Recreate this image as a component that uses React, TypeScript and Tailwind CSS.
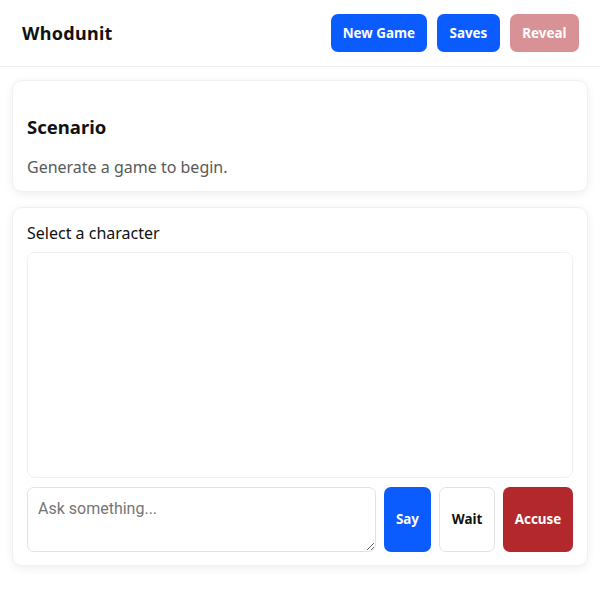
import React, { useState } from 'react';

const font = "font-['Noto_Sans',_'Open_Sans',_sans-serif]";

export default function App() {
  const [question, setQuestion] = useState('');

  return (
    <div className={`${font} min-h-[600px] bg-white text-[#111]`}>
      <header className="flex h-[67px] items-center justify-between border-b border-[#eeeeee] pl-[22px] pr-[21px]">
        <h1 className="text-[18px] font-bold tracking-[0.3px]">Whodunit</h1>
        <div className="flex gap-[10px]">
          <button className="h-[38px] rounded-[7px] bg-[#0b5cff] px-[12px] text-[13.4px] font-bold text-white">
            New Game
          </button>
          <button className="h-[38px] rounded-[7px] bg-[#0b5cff] px-[12.5px] text-[13.4px] font-bold text-white">
            Saves
          </button>
          <button
            disabled
            className="h-[38px] rounded-[7px] bg-[#b3282d] px-[12.5px] text-[13.4px] font-bold text-white opacity-50"
          >
            Reveal
          </button>
        </div>
      </header>

      <main className="flex flex-col gap-[15px] px-[12px] pt-[13px]">
        <section className="rounded-[10px] border border-[#f0f0f0] px-[14px] pb-[12px] pt-[32px] shadow-[0_2px_10px_rgba(0,0,0,0.07)]">
          <h2 className="text-[18.5px] font-bold leading-[27px]">Scenario</h2>
          <p className="mt-[15px] text-[16px] leading-[24px] text-[#5a5a5a]">Generate a game to begin.</p>
        </section>

        <section className="rounded-[10px] border border-[#f0f0f0] px-[14px] pb-[13px] pt-[13px] shadow-[0_2px_10px_rgba(0,0,0,0.07)]">
          <div className="text-[16px] leading-[24px]">Select a character</div>
          <div className="mt-[7px] h-[226px] rounded-[8px] border border-[#f0f0f0]" />
          <div className="mt-[9px] flex h-[65px] gap-[8px]">
            <textarea
              value={question}
              onChange={(e) => setQuestion(e.target.value)}
              placeholder="Ask something..."
              className="flex-1 resize-y rounded-[7px] border border-[#e2e2e2] p-[10px] font-['Roboto',_sans-serif] text-[16px] leading-[22px] outline-none placeholder:text-[#757575]"
            />
            <button className="w-[47px] rounded-[7px] bg-[#0b5cff] text-[13.4px] font-bold text-white">Say</button>
            <button className="w-[56px] rounded-[7px] border border-[#e2e2e2] bg-white text-[13.4px] font-bold text-[#111]">
              Wait
            </button>
            <button className="w-[70px] rounded-[7px] bg-[#b3282d] text-[13.4px] font-bold text-white">Accuse</button>
          </div>
        </section>
      </main>
    </div>
  );
}
